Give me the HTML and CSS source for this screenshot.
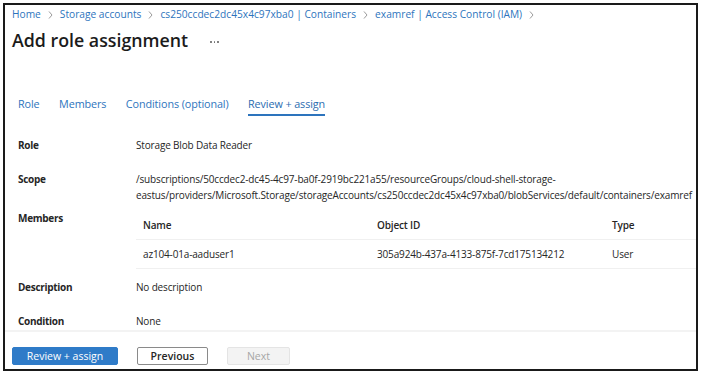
FILE: index.html
```html
<!DOCTYPE html>
<html>
<head>
<meta charset="utf-8">
<link rel="stylesheet" href="styles.css">
</head>
<body>
<div class="frame">
  <div class="main">
    <nav class="crumbs">
      <a>Home</a><svg class="sep" width="5" height="8" viewBox="0 0 5 8"><polyline points="1,0.5 4,4 1,7.5" fill="none" stroke="#8f8f8f" stroke-width="0.9"/></svg>
      <a>Storage accounts</a><svg class="sep" width="5" height="8" viewBox="0 0 5 8"><polyline points="1,0.5 4,4 1,7.5" fill="none" stroke="#8f8f8f" stroke-width="0.9"/></svg>
      <a>cs250ccdec2dc45x4c97xba0 | Containers</a><svg class="sep" width="5" height="8" viewBox="0 0 5 8"><polyline points="1,0.5 4,4 1,7.5" fill="none" stroke="#8f8f8f" stroke-width="0.9"/></svg>
      <a>examref | Access Control (IAM)</a><svg class="sep" width="5" height="8" viewBox="0 0 5 8"><polyline points="1,0.5 4,4 1,7.5" fill="none" stroke="#8f8f8f" stroke-width="0.9"/></svg>
    </nav>
    <div class="titlebar">
      <h1 class="title">Add role assignment</h1>
      <span class="more"><i></i><i></i><i></i></span>
    </div>
    <div class="tabs">
      <span class="tab">Role</span>
      <span class="tab">Members</span>
      <span class="tab">Conditions (optional)</span>
      <span class="tab active">Review + assign</span>
    </div>
    <div class="details">
      <div class="row r-role">
        <div class="label">Role</div>
        <div class="value">Storage Blob Data Reader</div>
      </div>
      <div class="row r-scope">
        <div class="label">Scope</div>
        <div class="value">/subscriptions/50ccdec2-dc45-4c97-ba0f-2919bc221a55/resourceGroups/cloud-shell-storage-eastus/providers/Microsoft.Storage/storageAccounts/cs250ccdec2dc45x4c97xba0/blobServices/default/containers/examref</div>
      </div>
      <div class="row r-members">
        <div class="label">Members</div>
        <div class="members">
          <div class="trow thead">
            <div class="c1">Name</div><div class="c2">Object ID</div><div class="c3">Type</div>
          </div>
          <div class="trow tbody">
            <div class="c1">az104-01a-aaduser1</div><div class="c2">305a924b-437a-4133-875f-7cd175134212</div><div class="c3">User</div>
          </div>
        </div>
      </div>
      <div class="row r-desc">
        <div class="label">Description</div>
        <div class="value">No description</div>
      </div>
      <div class="row r-cond">
        <div class="label">Condition</div>
        <div class="value">None</div>
      </div>
    </div>
  </div>
  <div class="footer">
    <button class="btn primary">Review + assign</button>
    <button class="btn secondary">Previous</button>
    <button class="btn disabled">Next</button>
  </div>
</div>
</body>
</html>
```
FILE: styles.css
```css
html, body {
  margin: 0;
  padding: 0;
  background: #ffffff;
}
body {
  font-family: "Open Sans", "Noto Sans", sans-serif;
  font-size: 10px;
  letter-spacing: -0.16px;
  color: #262626;
}
.frame {
  box-sizing: border-box;
  margin: 3px 0 0 3px;
  width: 695px;
  height: 368px;
  border: 2px solid #1a1a1a;
  display: flex;
  flex-direction: column;
  overflow: hidden;
}
.main {
  height: 325px;
  flex: none;
  padding: 2px 0 0 7px;
  box-sizing: border-box;
  overflow: hidden;
}
.crumbs {
  display: flex;
  align-items: center;
  height: 15px;
  font-size: 10.2px;
  letter-spacing: 0;
  line-height: 15px;
  color: #2d74bd;
  white-space: nowrap;
}
.crumbs .sep {
  margin: 1px 7px 0 7px;
}
.titlebar {
  display: flex;
  align-items: center;
  margin-top: 6px;
  height: 24px;
}
.title {
  margin: 0;
  font-size: 17.8px;
  font-weight: 600;
  letter-spacing: 0;
  color: #1b1b1b;
  line-height: 24px;
}
.more {
  display: flex;
  gap: 2px;
  margin-left: 22px;
  margin-top: 4px;
}
.more i {
  width: 1.5px;
  height: 1.5px;
  border-radius: 50%;
  background: #6b6b6b;
}
.tabs {
  display: flex;
  gap: 19.5px;
  margin-top: 44px;
  padding-left: 6px;
  font-size: 10.8px;
  letter-spacing: -0.1px;
  color: #2d74bd;
}
.tab {
  padding-bottom: 3px;
  border-bottom: 2px solid transparent;
  line-height: 15px;
}
.tab.active {
  color: #2b6cb0;
  border-bottom-color: #2d74bd;
}
.details {
  margin-top: 21px;
  padding-left: 6px;
}
.row {
  display: flex;
  line-height: 16px;
}
.label {
  width: 118px;
  flex: none;
  font-weight: 700;
  letter-spacing: -0.3px;
  color: #262626;
}
.value {
  flex: 1;
  color: #262626;
}
.r-scope { margin-top: 18px; }
.r-members { margin-top: 7px; }
.r-desc { margin-top: 10px; }
.r-cond { margin-top: 18px; }
.members {
  flex: 1;
}
.trow {
  display: flex;
  align-items: center;
  border-bottom: 1px solid #f0f0f0;
}
.thead {
  height: 29px;
  font-weight: 600;
}
.tbody {
  height: 28px;
}
.c1 { width: 234px; padding-left: 7px; }
.c2 { width: 235px; }
.c3 { flex: 1; }
.footer {
  flex: 1;
  border-top: 2px solid #f3f3f3;
  display: flex;
  align-items: flex-start;
  gap: 19px;
  padding: 15px 0 0 7px;
}
.btn {
  font-family: inherit;
  font-size: 10.5px;
  letter-spacing: 0;
  height: 18px;
  border-radius: 2px;
  padding: 0;
  box-sizing: border-box;
  line-height: 16px;
}
.primary {
  width: 106px;
  background: #2f7bc8;
  color: #fff;
  border: 1px solid #2f7bc8;
}
.secondary {
  width: 71px;
  background: #fff;
  color: #262626;
  border: 1px solid #8a8a8a;
  font-weight: 600;
}
.disabled {
  width: 63px;
  background: #f3f3f3;
  color: #a6a6a6;
  border: 1px solid #e4e4e4;
}
```
